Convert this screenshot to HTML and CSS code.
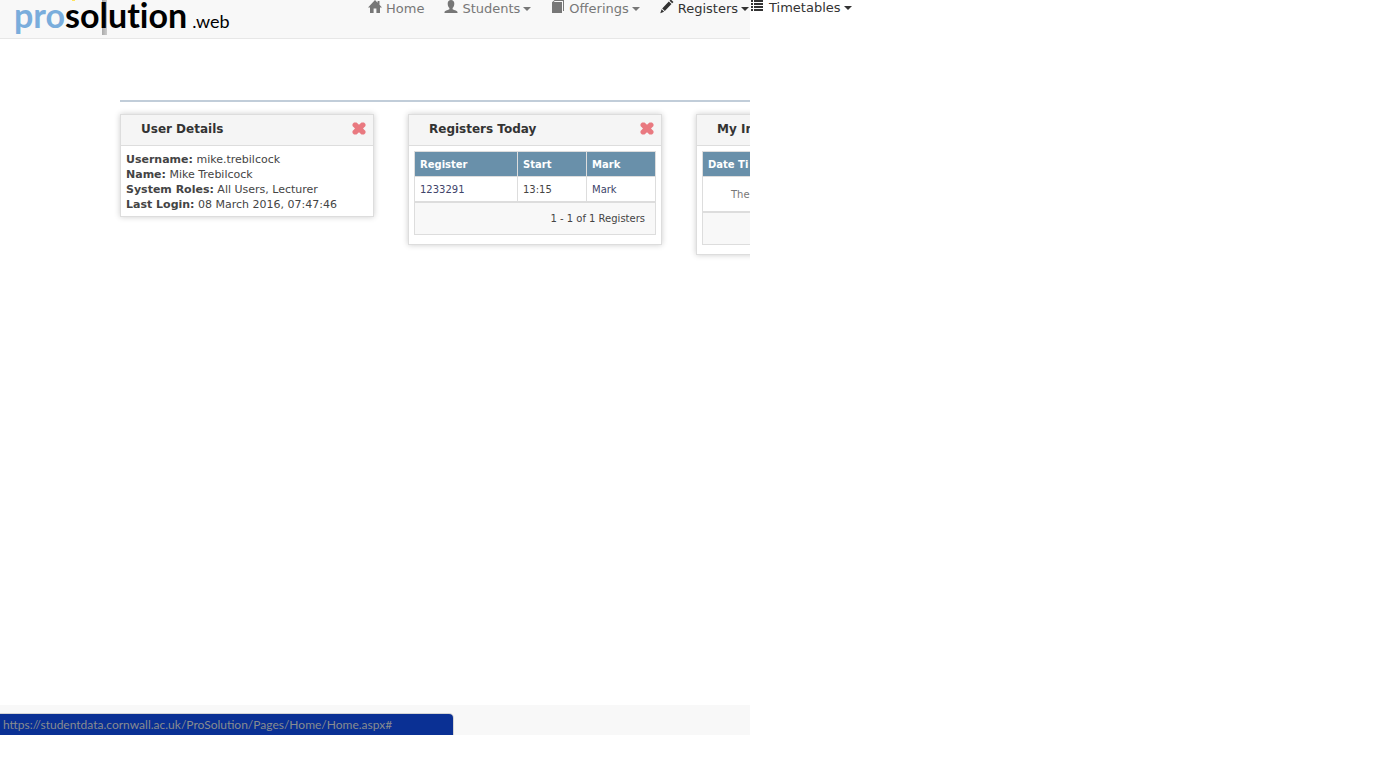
FILE: index.html
```html
<!DOCTYPE html>
<html lang="en">
<head>
<meta charset="utf-8">
<title>ProSolution Web</title>
<link rel="stylesheet" href="styles.css">
</head>
<body>
<svg class="sprite" aria-hidden="true">
  <symbol id="home" viewBox="0 0 14 14"><path d="M7 0 0 7.400h2V13h3.600V8.500h2.800V13H12V7.400h2L11.500 4.700V1H9.600v1.700z"/></symbol>
  <symbol id="user" viewBox="0 0 14 14"><path d="M7 0C5 0 3.700 1.400 3.700 3.400c0 2 .7 3.600 1.700 4.600v1.300C3.500 10.300.5 11 .5 12v1h13v-1c0-1-3-1.700-4.900-2.700V8c1-1 1.700-2.600 1.700-4.600C10.300 1.400 9 0 7 0z"/></symbol>
  <symbol id="book" viewBox="0 0 14 14"><path d="M3.500 0H13v11h-1V1H3.800L2.500 2H11v11H1V2.300z"/></symbol>
  <symbol id="pencil" viewBox="0 0 14 14"><path d="M10.800-.5 13.500 2l-1.300 1.300-2.700-2.500zM8.800 1.500l2.700 2.500-6.700 7-2.600-2.500zM1.600 9.300l2.500 2.500L.3 13.200z"/></symbol>
  <symbol id="list" viewBox="0 0 14 14"><path d="M1 0h2v2H1zM4 0h9v2H4zM1 3h2v2H1zM4 3h9v2H4zM1 6h2v2H1zM4 6h9v2H4zM1 9h2v2H1zM4 9h9v2H4z"/></symbol>
  <symbol id="cross" viewBox="0 0 14 13"><path d="M2 .5h2.500L7 2.700 9.500.5H12l1.500 1.500v2L11 6.500 13.500 9v2L12 12.500H9.500L7 10.300 4.500 12.500H2L.5 11V9L3 6.500.5 4V2z"/></symbol>
</svg>
<div class="page">
  <div class="app">
    <header class="navbar">
      <a class="logo" href="#"><span class="logo-pro">pro</span><span>so</span><span class="logo-l">l</span><span>ution</span><span class="logo-web">.web</span></a>
      <nav class="menu">
        <a href="#"><svg class="icon"><use href="#home"/></svg>Home</a>
        <a href="#"><svg class="icon"><use href="#user"/></svg>Students<i class="caret"></i></a>
        <a href="#"><svg class="icon"><use href="#book"/></svg>Offerings<i class="caret"></i></a>
        <a class="active" href="#"><svg class="icon"><use href="#pencil"/></svg>Registers<i class="caret"></i></a>
      </nav>
    </header>
    <main class="content">
      <div class="panels">
        <section class="panel">
          <header class="panel-head"><h2>User Details</h2><button class="close" aria-label="Close User Details"><svg><use href="#cross"/></svg></button></header>
          <div class="details">
            <div><b>Username:</b> mike.trebilcock</div>
            <div><b>Name:</b> Mike Trebilcock</div>
            <div><b>System Roles:</b> All Users, Lecturer</div>
            <div><b>Last Login:</b> 08 March 2016, 07:47:46</div>
          </div>
        </section>
        <section class="panel">
          <header class="panel-head"><h2>Registers Today</h2><button class="close" aria-label="Close Registers Today"><svg><use href="#cross"/></svg></button></header>
          <div class="grid">
            <table>
              <colgroup><col class="col-wide"><col><col></colgroup>
              <thead><tr><th>Register</th><th>Start</th><th>Mark</th></tr></thead>
              <tbody><tr><td><a href="#">1233291</a></td><td>13:15</td><td><a href="#">Mark</a></td></tr></tbody>
            </table>
            <div class="pager">1 - 1 of 1 Registers</div>
          </div>
        </section>
        <section class="panel">
          <header class="panel-head"><h2>My In</h2></header>
          <div class="grid">
            <table>
              <thead><tr><th>Date Ti</th></tr></thead>
              <tbody><tr><td class="empty">The</td></tr></tbody>
            </table>
            <div class="pager"></div>
          </div>
        </section>
      </div>
    </main>
    <footer class="footer">
      <div class="status">https://studentdata.cornwall.ac.uk/ProSolution/Pages/Home/Home.aspx#</div>
    </footer>
  </div>
  <nav class="overflow">
    <a href="#"><svg class="icon"><use href="#list"/></svg>Timetables<i class="caret"></i></a>
  </nav>
</div>
</body>
</html>
```
FILE: styles.css
```css
* { box-sizing: border-box; }
body { margin: 0; background: #fff; color: #444; font: 11px/15px Verdana, "DejaVu Sans", sans-serif; }
a { color: inherit; text-decoration: none; }
.sprite { position: absolute; width: 0; height: 0; }
.page { display: grid; grid-template-columns: minmax(0, 750fr) minmax(0, 626fr); min-height: 100vh; padding-bottom: 43px; }
.app { display: flex; flex-direction: column; overflow: hidden; }

.navbar { display: flex; align-items: flex-start; height: 39px; padding-left: 14px; background: #f8f8f8; border-bottom: 1px solid #e7e7e7; }
.logo { position: relative; flex: 0 0 354px; height: 38px; color: #000; font: 700 34px/30px Lato, sans-serif; font-variant-ligatures: none; white-space: nowrap; }
.logo::before { content: ""; position: absolute; left: 58px; top: 0; width: 3px; height: 1px; background: #ffe45c; }
.logo-pro { color: #7aaddc; }
.logo-l { background: linear-gradient(90deg, transparent 2px, #aaa 2px, #ccc 7px, transparent 7px); }
.logo-web { margin-left: 5px; font-size: 18px; font-weight: 400; }
.menu { display: flex; gap: 20px; }
.menu a, .overflow a { display: flex; align-items: flex-start; color: #777; font-size: 13px; line-height: 18px; white-space: nowrap; }
.menu .active, .overflow a { color: #333; }
.icon { width: 14px; height: 14px; margin-right: 4px; fill: currentColor; }
.caret { align-self: center; margin-left: 3px; border: 4px solid transparent; border-top-color: currentColor; border-bottom: 0; }
.overflow a { line-height: 16px; }
.overflow .icon { margin-right: 5px; }

.content { flex: 1; padding: 61px 0 0 120px; }
.panels { display: flex; align-items: flex-start; gap: 34px; padding-top: 12px; border-top: 2px solid #c1cdd9; }
.panel { flex: 0 0 254px; background: #fff; border: 1px solid #ddd; box-shadow: 0 0 6px rgba(0, 0, 0, .2); }
.panel-head { display: flex; align-items: center; justify-content: space-between; height: 31px; padding: 0 7px 2px 20px; background: #f5f5f5; border-bottom: 1px solid #ddd; }
h2 { margin: 0; color: #333; font-size: 12px; line-height: 16px; }
.close { display: flex; padding: 0 0 2px; border: 0; background: none; cursor: pointer; }
.close svg { width: 14px; height: 13px; fill: #e97980; }
.details { padding: 6px 5px 4px; }
.grid { padding: 5px 5px 9px; }
table { width: 100%; table-layout: fixed; border-collapse: collapse; font-size: 10px; }
.col-wide { width: 103px; }
th, td { height: 25px; padding: 0 5px; border: 1px solid #ddd; text-align: left; }
th { background: #6990aa; color: #fff; }
td a { color: #40446a; }
td.empty { height: 35px; padding-left: 28px; color: #777; }
.pager { height: 33px; padding: 8px 10px; background: #f8f8f8; border: 1px solid #ddd; font-size: 10px; text-align: right; }

.footer { position: relative; height: 30px; background: #f8f8f8; }
.status { position: absolute; left: 0; bottom: 0; width: 453px; height: 21px; padding-left: 3px; background: #0a3094; border-radius: 0 4px 0 0; box-shadow: 0 0 0 1px #d5d5d5; color: #888c90; font: 12px/22px "Segoe UI", Lato, sans-serif; white-space: nowrap; }
```
